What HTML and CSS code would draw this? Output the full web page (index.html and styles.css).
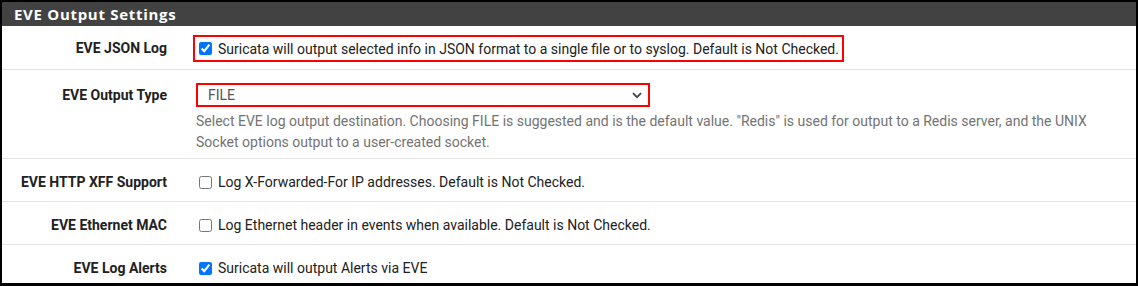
FILE: index.html
```html
<!DOCTYPE html>
<html>
<head>
<meta charset="utf-8">
<link rel="stylesheet" href="styles.css">
</head>
<body>
<div class="frame">
  <div class="panel-heading">EVE Output Settings</div>
  <div class="row r1">
    <div class="label">EVE JSON Log</div>
    <div class="content">
      <label class="mark check-mark"><input type="checkbox" checked> <span>Suricata will output selected info in JSON format to a single file or to syslog. Default is Not Checked.</span></label>
    </div>
  </div>
  <div class="row r2">
    <div class="label">EVE Output Type</div>
    <div class="content">
      <div class="select-wrap">
        <select class="select"><option>FILE</option></select>
        <svg class="chev" width="10" height="7" viewBox="0 0 10 7"><path d="M1 1.2 L5 5.2 L9 1.2" fill="none" stroke="#444" stroke-width="1.8"/></svg>
      </div>
      <div class="help">Select EVE log output destination. Choosing FILE is suggested and is the default value. "Redis" is used for output to a Redis server, and the UNIX Socket options output to a user-created socket.</div>
    </div>
  </div>
  <div class="row r3">
    <div class="label">EVE HTTP XFF Support</div>
    <div class="content">
      <label class="check"><input type="checkbox"> <span>Log X-Forwarded-For IP addresses. Default is Not Checked.</span></label>
    </div>
  </div>
  <div class="row r3">
    <div class="label">EVE Ethernet MAC</div>
    <div class="content">
      <label class="check"><input type="checkbox"> <span>Log Ethernet header in events when available. Default is Not Checked.</span></label>
    </div>
  </div>
  <div class="row r5">
    <div class="label">EVE Log Alerts</div>
    <div class="content">
      <label class="check"><input type="checkbox" checked> <span>Suricata will output Alerts via EVE</span></label>
    </div>
  </div>
</div>
</body>
</html>
```
FILE: styles.css
```css
* { box-sizing: border-box; }
html, body { margin: 0; padding: 0; background: #fff; }
body {
  font-family: Roboto, "Liberation Sans", sans-serif;
  font-size: 14px;
  color: #212121;
}
.frame {
  width: 1138px;
  height: 286px;
  border-style: solid;
  border-color: #000;
  border-width: 2px 2px 3px 2px;
  overflow: hidden;
}
.panel-heading {
  height: 24px;
  background: #424242;
  color: #fff;
  font-family: "Open Sans", Roboto, sans-serif;
  font-weight: bold;
  font-size: 15px;
  letter-spacing: 0.7px;
  line-height: 24px;
  padding-left: 12px;
}
.row {
  display: flex;
  border-bottom: 1px solid #e3e3e3;
}
.row.r5 { border-bottom: none; }
.label {
  width: 165px;
  flex: none;
  text-align: right;
  font-weight: bold;
  color: #212121;
}
.content {
  margin-left: 26px;
}
.r1 { height: 44px; }
.r1 .label { padding-top: 14px; }
.r1 .content { padding-top: 9px; margin-left: 26px; }
.mark {
  display: inline-flex;
  align-items: center;
  border: 2px solid #f00;
  height: 27px;
  padding: 0 3px 0 4px;
}
.check { display: inline-flex; align-items: center; }
input[type=checkbox] {
  margin: 0 6px 0 0;
  width: 13px;
  height: 13px;
}
.check input { margin-left: 6px; }
.r2 { height: 89px; }
.r2 .label { padding-top: 17px; }
.r2 .content { padding-top: 13px; margin-left: 29px; }
.select-wrap { position: relative; width: 454px; }
.select {
  appearance: none;
  -webkit-appearance: none;
  width: 454px;
  height: 24px;
  border: 2px solid #f00;
  border-radius: 0;
  background: #fff;
  font-family: Roboto, "Liberation Sans", sans-serif;
  font-size: 14px;
  color: #555;
  padding: 0 0 0 10px;
  outline: none;
}
.chev { position: absolute; right: 8px; top: 9px; }
.help {
  width: 910px;
  color: #737373;
  line-height: 21px;
  margin-top: 4px;
}
.r3 { height: 43px; }
.r3 .label { padding-top: 15px; }
.r3 .content { padding-top: 15px; margin-left: 26px; }
.r5 { height: 38px; }
.r5 .label { padding-top: 15px; }
.r5 .content { padding-top: 15px; margin-left: 26px; }
```
